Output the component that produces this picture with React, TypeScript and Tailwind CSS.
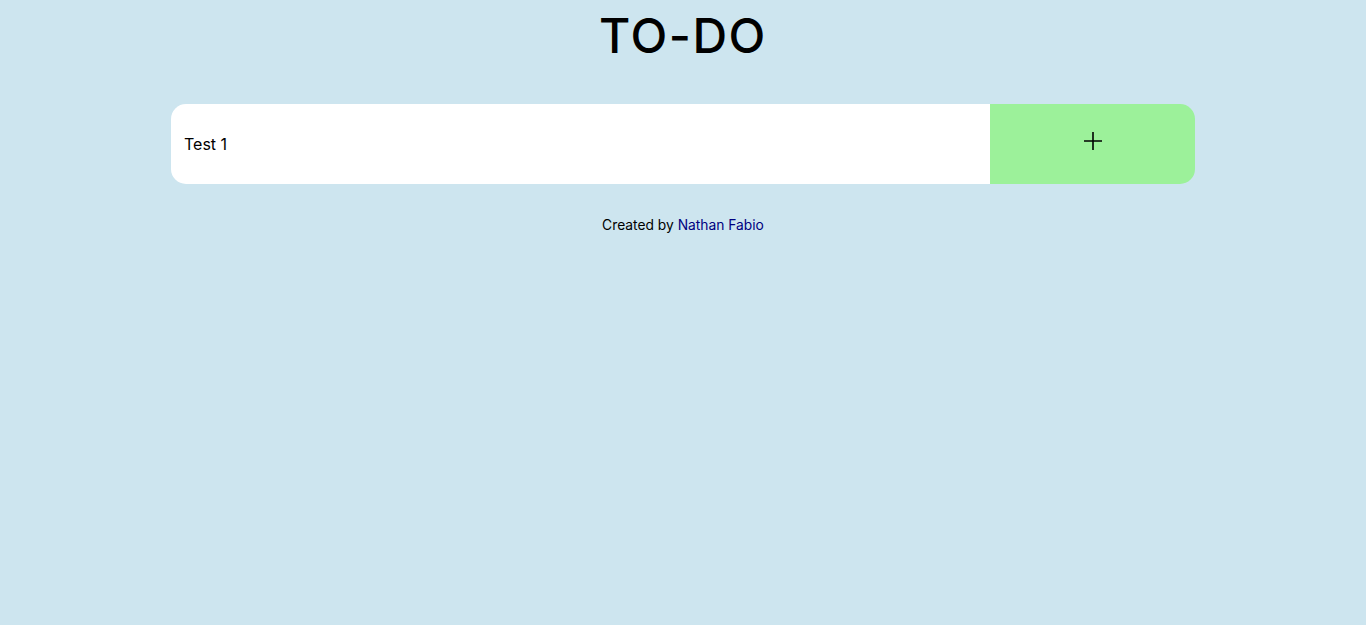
import React, { useState } from 'react';

export default function App() {
  const [task, setTask] = useState('Test 1');

  return (
    <div className="min-h-screen w-full bg-[#cde5ef] font-['Inter',sans-serif] text-black">
      <div className="mx-auto w-[1024px] flex flex-col items-center">
        <h1 className="mt-[6px] text-[48px] leading-[60px] font-medium tracking-[1.5px]">TO-DO</h1>

        <form
          className="mt-[38px] w-full h-[80px] flex rounded-[15px] overflow-hidden"
          onSubmit={(e) => e.preventDefault()}
        >
          <input
            value={task}
            onChange={(e) => setTask(e.target.value)}
            className="w-[80%] h-full bg-white px-[13px] text-[16px] outline-none"
          />
          <button type="submit" className="flex-1 h-full bg-[#9cf19a] flex items-center justify-center pb-[6px]">
            <svg width="20" height="20" viewBox="0 0 20 20" stroke="black" strokeWidth="1.6" fill="none">
              <path d="M10 1v18M1 10h18" />
            </svg>
          </button>
        </form>

        <p className="mt-[31px] text-[13.8px]">
          Created by <a href="#" className="text-[#000080]">Nathan Fabio</a>
        </p>
      </div>
    </div>
  );
}
